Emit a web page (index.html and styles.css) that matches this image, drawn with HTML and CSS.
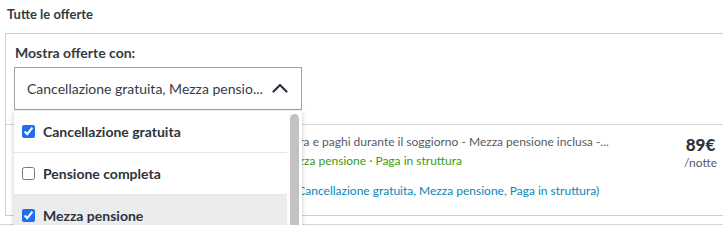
FILE: index.html
```html
<!DOCTYPE html>
<html lang="it">
<head>
<meta charset="utf-8">
<title>Tutte le offerte</title>
<link rel="stylesheet" href="styles.css">
</head>
<body>
<h2 class="title">Tutte le offerte</h2>
<section class="panel">
  <div class="filter">
    <div class="filter-label">Mostra offerte con:</div>
    <div class="select">
      <div class="select-box">
        <span class="select-value">Cancellazione gratuita, Mezza pensio...</span>
        <svg class="chevron" width="16" height="10" viewBox="0 0 16 10"><path d="M1.5 8.5 L8 2 L14.5 8.5" fill="none" stroke="#2b3340" stroke-width="2.2" stroke-linecap="round" stroke-linejoin="round"/></svg>
      </div>
      <div class="dropdown">
        <ul class="options">
          <li class="option"><input type="checkbox" checked><span>Cancellazione gratuita</span></li>
          <li class="option"><input type="checkbox"><span>Pensione completa</span></li>
          <li class="option option-hover"><input type="checkbox" checked><span>Mezza pensione</span></li>
        </ul>
        <div class="scroll-track"><div class="scroll-thumb"></div></div>
      </div>
    </div>
  </div>
  <div class="offer">
    <div class="offer-info">
      <div class="offer-name">Camera Doppia - Prenota ora e paghi durante il soggiorno - Mezza pensione inclusa -...</div>
      <div class="offer-tags">Cancellazione gratuita · Mezza pensione · Paga in struttura</div>
      <div class="offer-more">Vedi altre 12 offerte simili (Cancellazione gratuita, Mezza pensione, Paga in struttura)</div>
    </div>
    <div class="offer-price">
      <div class="price">89€</div>
      <div class="per-night">/notte</div>
    </div>
  </div>
</section>
<div class="next-section"></div>
</body>
</html>
```
FILE: styles.css
```css
html, body {
  margin: 0;
  padding: 0;
  background: #fff;
  overflow: hidden;
}
body {
  font-family: Lato, "Open Sans", sans-serif;
  color: #333a44;
}
.title {
  margin: 0;
  padding: 6px 0 0 7px;
  height: 27px;
  font-size: 13px;
  font-weight: 700;
  line-height: 16px;
  color: #333a44;
}
.panel {
  margin-left: 5px;
  border: 1px solid #cfcfcf;
  border-right: none;
}
.filter {
  padding: 10px 0 14px 8px;
}
.filter-label {
  font-size: 14px;
  font-weight: 700;
  line-height: 17px;
  margin-bottom: 6px;
  padding-left: 1px;
}
.select {
  position: relative;
  width: 288px;
}
.select-box {
  box-sizing: border-box;
  height: 43px;
  border: 1px solid #a3a3a3;
  display: flex;
  align-items: center;
  justify-content: space-between;
  padding: 0 13px 0 12px;
  font-size: 14px;
  color: #363c46;
}
.chevron {
  display: block;
  margin-top: -2px;
}
.dropdown {
  position: absolute;
  top: 44px;
  left: 0;
  width: 288px;
  height: 123px;
  overflow: hidden;
  background: #fff;
  box-shadow: 0 1px 5px rgba(0,0,0,0.22);
  display: flex;
  z-index: 2;
}
.options {
  list-style: none;
  margin: 0;
  padding: 0;
  flex: 1;
}
.option {
  display: flex;
  align-items: center;
  height: 41px;
  border-bottom: 1px solid #e6e6e6;
  padding-left: 8px;
  font-size: 14px;
  font-weight: 700;
  color: #2d333d;
}
.option input {
  margin: 0 8px 0 0;
  width: 13px;
  height: 13px;
  accent-color: #1c6ef2;
}
.option-hover {
  background: #ebecee;
}
.scroll-track {
  width: 15px;
  padding-top: 3px;
  display: flex;
  justify-content: center;
}
.scroll-thumb {
  width: 9px;
  height: 200px;
  border-radius: 5px;
  background: #c2c2c2;
}
.offer {
  border-top: 1px solid #d6d6d6;
  height: 90px;
  display: flex;
  justify-content: space-between;
}
.offer-info {
  padding: 7px 0 0 150px;
  width: 470px;
  font-size: 12px;
  line-height: 19px;
}
.offer-name {
  color: #555b63;
  white-space: nowrap;
}
.offer-tags {
  color: #3a9a12;
}
.offer-more {
  margin-top: 11px;
  color: #0a86b8;
  white-space: nowrap;
}
.offer-price {
  padding: 11px 6px 0 0;
  text-align: center;
}
.price {
  font-size: 17px;
  font-weight: 900;
  line-height: 18px;
  color: #2d333d;
}
.per-night {
  font-size: 12px;
  line-height: 18px;
  color: #555b63;
}
.next-section {
  margin-top: 8px;
  border-top: 1px solid #d6d6d6;
}
```
